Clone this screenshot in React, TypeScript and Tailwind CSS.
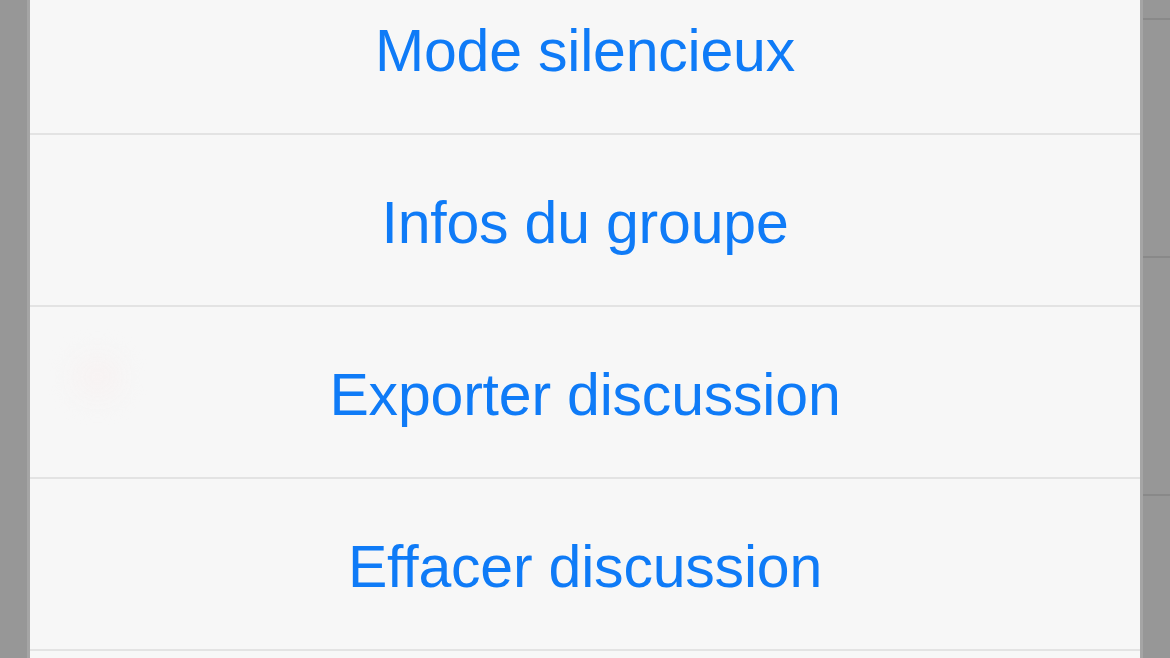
import React from 'react'

const ACTIONS = ['Mode silencieux', 'Infos du groupe', 'Exporter discussion', 'Effacer discussion', '']

export default function App() {
  return (
    <div
      className="relative flex h-[658px] w-[1170px] justify-end overflow-hidden bg-[#979797]"
      style={{ fontFamily: '"Liberation Sans", Arial, sans-serif' }}
    >
      {/* dimmed list behind the sheet (only its right edge shows) */}
      <div className="flex w-[40px] flex-col">
        <div className="h-[20px] border-b-2 border-[#898989]" />
        <div className="h-[238px] border-b-2 border-[#898989]" />
        <div className="h-[238px] border-b-2 border-[#898989]" />
      </div>

      {/* action sheet */}
      <div className="absolute left-[27px] right-[27px] top-[-37px] border-x-[3px] border-[#a5a5a5] bg-[#f7f7f7]">
        {ACTIONS.map((label, i) => (
          <div
            key={i}
            className="relative flex h-[172px] items-center justify-center border-b-2 border-[#e3e3e3]"
          >
            {i === 2 && (
              <div className="absolute left-[45px] top-[50px] h-[40px] w-[45px] rounded-full bg-[#f7f2f2] blur-md" />
            )}
            <span className="relative pt-[6px] text-[59px] leading-none tracking-[-0.2px] text-[#0f7bf7]">{label}</span>
          </div>
        ))}
      </div>
    </div>
  )
}
